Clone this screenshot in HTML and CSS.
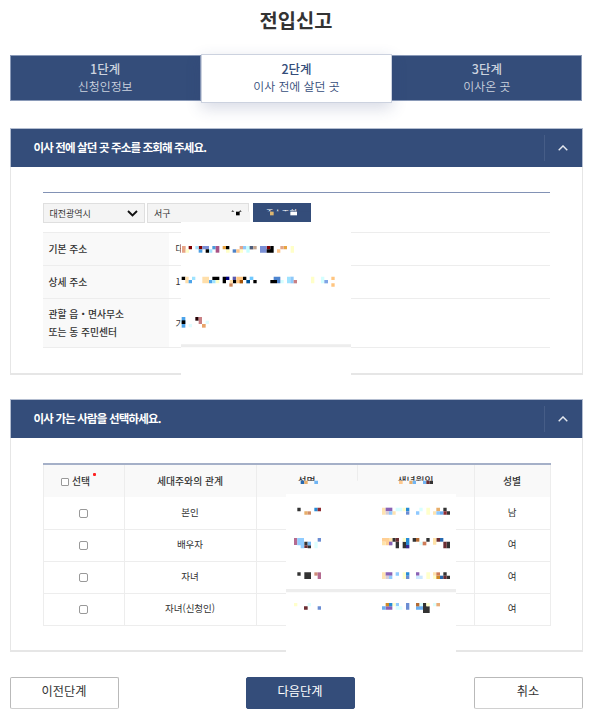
FILE: index.html
```html
<!DOCTYPE html>
<html lang="ko">
<head>
<meta charset="utf-8">
<title>전입신고</title>
<link rel="stylesheet" href="styles.css">
</head>
<body>
<main class="page">
  <h1 class="title">전입신고</h1>
  <ol class="steps">
    <li class="step"><strong>1단계</strong><span>신청인정보</span></li>
    <li class="step active"><strong>2단계</strong><span>이사 전에 살던 곳</span></li>
    <li class="step"><strong>3단계</strong><span>이사온 곳</span></li>
  </ol>

  <section class="panel panel-address">
    <header class="panel-head">
      <h2 class="long">이사 전에 살던 곳 주소를 조회해 주세요.</h2>
      <span class="toggle"><svg width="10" height="6" viewBox="0 0 10 6"><path d="M.7 5.2 5 .9l4.3 4.3"/></svg></span>
    </header>
    <div class="panel-body">
      <div class="search">
        <div class="select">대전광역시<svg width="11" height="7" viewBox="0 0 11 7"><path d="M1 1l4.5 4.4L10 1"/></svg></div>
        <div class="select">서구<svg width="11" height="7" viewBox="0 0 11 7"><path d="M1 1l4.5 4.4L10 1"/></svg></div>
        <div class="lookup">주소조회</div>
      </div>
      <dl class="info">
        <dt>기본 주소</dt><dd>대</dd>
        <dt>상세 주소</dt><dd>1</dd>
        <dt class="tall">관할 읍・면사무소<br>또는 동 주민센터</dt><dd class="tall">가</dd>
      </dl>
    </div>
    <svg class="redaction" width="573" height="250" viewBox="30 384 1719 750">
      <path fill="#fff" d="M543 666h510v464H543z"/>
      <g transform="translate(480 570)">
        <path fill="#f4f4f4" d="M190 65h80v31H190z"/>
        <path fill="#344d7a" d="M279 64h174v32H279z"/>
        <path fill="#000" d="M228 65h11v11h-11z"/>
        <path fill="#dcb670" d="M330 65h11v11h-11z"/>
        <path fill="#fff" d="M391 65h20v11h-20z"/>
        <path fill="#e8a486" d="M66 168h11v20H66zM269 168h10v10h-10z"/>
        <path fill="#800000" d="M86 168h10v10H86zM116 168h11v10h-11zM320 168h11v10h-11z"/>
        <path fill="#ffffc8" d="M77 178h10v10H77zM198 178h11v10h-11zM239 178h10v10h-10zM392 168h10v20h-10z"/>
        <path fill="#a5e3ff" d="M106 168h10v10h-10zM147 178h10v10h-10z"/>
        <path fill="#4c9fe5" d="M116 178h11v10h-11z"/>
        <path fill="#7a8fd5" d="M127 168h20v10h-20zM300 168h20v20h-20z"/>
        <path fill="#000" d="M137 178h10v10h-10zM198 168h10v10h-10zM320 178h21v10h-21zM331 168h10v10h-10z"/>
        <path fill="#4d9bdc" d="M157 168h10v10h-10z"/>
        <path fill="#a95386" d="M167 168h11v20h-11z"/>
        <path fill="#e8a440" d="M188 168h10v10h-10zM371 168h10v10h-10z"/>
        <path fill="#4d82c8" d="M218 178h11v10h-11z"/>
        <path fill="#ffc68a" d="M229 178h10v10h-10zM351 178h10v10h-10z"/>
        <path fill="#e2a58a" d="M239 168h10v10h-10zM361 168h10v10h-10z"/>
        <path fill="#8ec9fa" d="M249 168h10v10h-10z"/>
        <path fill="#c8ffff" d="M259 168h10v20h-10z"/>
        <path fill="#4d5d7c" d="M269 168h11v10h-11z"/>
        <path fill="#c1a28c" d="M280 168h10v10h-10z"/>
        <path fill="#000" d="M65 260h11v10H65zM157 260h21v10h-21zM188 260h10v20h-10zM218 270h11v10h-11zM249 260h10v10h-10zM280 270h10v10h-10zM331 270h20v10h-20z"/>
        <path fill="#ffdfaa" d="M76 260h10v20H76zM127 260h20v20h-20zM209 270h10v10h-10z"/>
        <path fill="#4da4ea" d="M86 270h10v10H86zM147 270h10v10h-10z"/>
        <path fill="#9ee3ff" d="M96 260h10v10H96zM157 270h10v10h-10zM381 260h10v20h-10z"/>
        <path fill="#ffffc8" d="M167 270h11v10h-11zM453 260h10v20h-10z"/>
        <path fill="#000080" d="M198 260h10v10h-10z"/>
        <path fill="#ce875b" d="M208 280h10v10h-10z"/>
        <path fill="#5c5aac" d="M218 260h10v10h-10z"/>
        <path fill="#ffc580" d="M229 260h20v20h-20zM514 260h10v10h-10zM514 280h10v10h-10z"/>
        <path fill="#a65408" d="M239 270h10v10h-10z"/>
        <path fill="#00559a" d="M259 270h11v10h-11z"/>
        <path fill="#70c9ff" d="M269 260h11v10h-11z"/>
        <path fill="#d4ffff" d="M361 270h10v10h-10zM483 260h10v20h-10z"/>
        <path fill="#4d85d0" d="M341 260h20v10h-20zM351 270h10v10h-10z"/>
        <path fill="#8ec9fa" d="M391 260h10v20h-10z"/>
        <path fill="#c98084" d="M401 270h10v10h-10z"/>
        <path fill="#7fa5e5" d="M493 270h11v10h-11z"/>
      </g>
      <g transform="translate(480 840)">
        <path fill="#4da4ea" d="M65 111h11v32H65z"/>
        <path fill="#000" d="M65 121h11v11H65z"/>
        <path fill="#dffcff" d="M86 132h10v10H86zM137 122h10v10h-10z"/>
        <path fill="#250004" d="M106 111h10v11h-10z"/>
        <path fill="#c98084" d="M116 111h10v21h-10z"/>
        <path fill="#e8a46a" d="M126 132h11v11h-11z"/>
        <path fill="#ededed" d="M63 193h510v9H63z"/>
      </g>
    </svg>
  </section>

  <section class="panel panel-people">
    <header class="panel-head">
      <h2>이사 가는 사람을 선택하세요.</h2>
      <span class="toggle"><svg width="10" height="6" viewBox="0 0 10 6"><path d="M.7 5.2 5 .9l4.3 4.3"/></svg></span>
    </header>
    <div class="panel-body">
      <table class="people">
        <colgroup><col class="c1"><col class="c2"><col class="c3"><col class="c4"><col class="c5"></colgroup>
        <thead><tr><th><span class="pick"><i class="box small"></i>선택<b class="dot"></b></span></th><th>세대주와의 관계</th><th>성명</th><th>생년월일</th><th>성별</th></tr></thead>
        <tbody>
          <tr><td><i class="box"></i></td><td>본인</td><td></td><td></td><td>남</td></tr>
          <tr><td><i class="box"></i></td><td>배우자</td><td></td><td></td><td>여</td></tr>
          <tr><td><i class="box"></i></td><td>자녀</td><td></td><td></td><td>여</td></tr>
          <tr><td><i class="box"></i></td><td>자녀(신청인)</td><td></td><td></td><td>여</td></tr>
        </tbody>
      </table>
    </div>
    <svg class="redaction" width="573" height="258" viewBox="30 1197 1719 774">
      <path fill="#f9f9f9" d="M858 1442h510v42H858z"/>
      <path fill="#fff" d="M858 1482h510v486H858z"/>
      <g transform="translate(810 1350)">
        <path fill="#2769b0" d="M92 92h11v10H92z"/>
        <path fill="#e8ae6a" d="M103 92h10v10h-10zM418 92h10v10h-10z"/>
        <path fill="#70b5f4" d="M133 92h11v10h-11zM428 92h10v10h-10zM459 92h10v10h-10z"/>
        <path fill="#ffc98e" d="M387 92h11v10h-11z"/>
        <path fill="#6b2d32" d="M469 92h10v10h-10z"/>
        <path fill="#333" d="M479 92h10v10h-10zM82 173h10v11H82zM520 173h10v11h-10zM530 184h10v10h-10z"/>
        <path fill="#e8ae6a" d="M103 184h10v10h-10zM499 173h11v11h-11z"/>
        <path fill="#cf8c68" d="M113 184h10v10h-10z"/>
        <path fill="#278bd5" d="M133 173h10v11h-10zM408 173h10v11h-10z"/>
        <path fill="#8e2b30" d="M143 173h10v11h-10zM520 184h10v10h-10z"/>
        <path fill="#ffe3b0" d="M336 173h11v21h-11zM367 184h10v10h-10zM489 184h10v10h-10z"/>
        <path fill="#8a62b5" d="M347 173h20v11h-20z"/>
        <path fill="#d6ccd6" d="M347 184h10v10h-10z"/>
        <path fill="#8ec9ff" d="M357 184h10v10h-10zM438 184h10v10h-10zM499 184h11v10h-11z"/>
        <path fill="#d8ffff" d="M377 173h20v11h-20zM448 173h10v11h-10z"/>
        <path fill="#ffffcb" d="M398 173h10v11h-10zM469 173h11v21h-11z"/>
        <path fill="#6b8dd3" d="M408 184h10v10h-10z"/>
        <path fill="#67adf0" d="M510 184h10v10h-10z"/>
        <path fill="#b46a90" d="M72 264h10v21H72z"/>
        <path fill="#90ccff" d="M82 264h20v22H82zM92 286h11v9H92zM357 275h10v10h-10z"/>
        <path fill="#333" d="M103 275h10v11h-10zM113 286h10v9h-10zM367 264h10v11h-10zM377 275h10v20h-10zM398 275h10v20h-10zM428 264h10v11h-10zM469 264h10v11h-10zM530 275h10v20h-10z"/>
        <path fill="#6b2d32" d="M103 286h10v8h-10zM377 264h10v11h-10zM499 264h11v11h-11zM520 275h10v20h-10z"/>
        <path fill="#70b5f4" d="M113 275h10v11h-10z"/>
        <path fill="#6b8dd3" d="M143 264h10v11h-10z"/>
        <path fill="#ddffff" d="M133 275h10v20h-10zM448 275h10v11h-10z"/>
        <path fill="#ffcf94" d="M336 264h21v11h-21zM347 275h10v11h-10z"/>
        <path fill="#ffe3a9" d="M357 264h10v11h-10zM336 275h11v11h-11zM489 264h10v20h-10z"/>
        <path fill="#8a62b5" d="M357 275h10v11h-10z"/>
        <path fill="#ffffcb" d="M398 264h10v11h-10z"/>
        <path fill="#278bd5" d="M408 264h10v21h-10z"/>
        <path fill="#352b91" d="M408 285h10v10h-10z"/>
        <path fill="#b46a32" d="M438 264h10v11h-10z"/>
        <path fill="#cf7c58" d="M458 275h11v11h-11z"/>
        <path fill="#2769b0" d="M510 264h10v11h-10z"/>
      </g>
      <g transform="translate(810 1620)">
        <path fill="#333" d="M82 97h10v10H82zM103 97h20v20h-20zM520 97h10v10h-10zM530 107h10v10h-10zM459 189h10v30h-10zM469 199h10v20h-10z"/>
        <path fill="#cf8c78" d="M133 97h10v10h-10z"/>
        <path fill="#b46a90" d="M143 97h10v20h-10z"/>
        <path fill="#ffe3b0" d="M336 97h11v20h-11zM489 97h10v10h-10z"/>
        <path fill="#8a62b5" d="M347 97h20v10h-20zM438 97h10v10h-10zM347 199h20v10h-20z"/>
        <path fill="#d6ccd6" d="M347 107h10v10h-10z"/>
        <path fill="#90ccff" d="M357 107h10v10h-10zM377 97h10v10h-10zM377 189h10v10h-10z"/>
        <path fill="#ffffcb" d="M398 97h10v20h-10zM469 97h11v20h-11zM489 107h10v10h-10zM367 189h10v10h-10zM469 189h10v10h-10zM72 189h10v10H72z"/>
        <path fill="#278bd5" d="M408 97h10v10h-10zM357 189h10v10h-10z"/>
        <path fill="#6b8dd3" d="M408 107h10v10h-10zM143 199h10v10h-10zM408 189h10v20h-10z"/>
        <path fill="#cce8ff" d="M438 107h20v10h-20z"/>
        <path fill="#ce7c58" d="M499 97h11v10h-11z"/>
        <path fill="#d08a25" d="M499 107h11v10h-11zM347 189h10v10h-10z"/>
        <path fill="#2769b0" d="M510 107h10v10h-10z"/>
        <path fill="#6b2d32" d="M520 107h10v10h-10zM102 199h11v10h-11z"/>
        <path fill="#ededed" d="M48 147h510v10H48z"/>
        <path fill="#ddffff" d="M113 189h10v10h-10zM448 189h11v10h-11zM489 189h10v10h-10zM377 199h20v10h-20z"/>
        <path fill="#6bafef" d="M336 199h11v10h-11zM438 199h21v10h-21z"/>
        <path fill="#b46a32" d="M438 189h10v10h-10z"/>
        <path fill="#e8ae7a" d="M499 189h11v10h-11z"/>
      </g>
    </svg>
  </section>

  <nav class="actions">
    <div class="btn">이전단계</div>
    <div class="btn primary">다음단계</div>
    <div class="btn">취소</div>
  </nav>
</main>
</body>
</html>
```
FILE: styles.css
```css
* { box-sizing: border-box; }
body {
  margin: 0;
  background: #fff;
  color: #333;
  font-family: "Noto Sans CJK KR", sans-serif;
  font-size: 9.8px;
}
.page { width: 573px; margin-left: 9.5px; height: 728px; }
.title {
  margin: 0;
  height: 55px;
  padding-top: 5px;
  font-size: 19.8px;
  line-height: 30px;
  font-weight: 700;
  text-align: center;
}
.steps {
  display: flex;
  height: 46px;
  margin: 0;
  padding: 0;
  list-style: none;
}
.step {
  flex: 1;
  display: flex;
  flex-direction: column;
  align-items: center;
  padding-top: 5px;
  background: #344d7a;
  border: 1px solid #8a9ab8;
  border-left-width: 0;
  color: #ccd3df;
  font-size: 11.9px;
  line-height: 16.5px;
}
.step:first-child { border-left-width: 1px; }
.step strong { font-size: 12.5px; font-weight: 500; }
.step.active {
  position: relative;
  height: 49px;
  margin-top: -1px;
  padding-top: 6px;
  background: #fff;
  border: 1px solid #ccd2df;
  color: #344d7a;
  box-shadow: 0 5px 16px rgba(52, 67, 122, .2);
}
.step span { font-weight: 350; }
.panel { position: relative; border: 1px solid #e6e6e6; border-width: 0 1.5px 2px; }
.panel-address { height: 247px; margin-top: 27px; }
.panel-people { height: 253px; margin-top: 24px; }
.panel-head {
  display: flex;
  align-items: center;
  justify-content: space-between;
  height: 39px;
  margin: 0 -1px;
  padding-left: 23px;
  background: #344d7a;
  border: 1px solid #b3bdd0;
  border-width: 1px 1px 0;
}
.panel-head h2 {
  margin: 0;
  padding-bottom: 2px;
  color: #fff;
  font-size: 11.5px;
  font-weight: 700;
  letter-spacing: -.82px;
}
.panel-head h2.long { letter-spacing: -.86px; }
.toggle {
  display: flex;
  align-items: center;
  justify-content: center;
  width: 38px;
  height: 26px;
  border-left: 1px solid #465d87;
}
.toggle svg { fill: none; stroke: #e4e8ef; stroke-width: 1.4; }
.panel-body { padding: 25px 31.5px 0 32px; }
.search {
  display: flex;
  gap: 2.5px;
  padding-top: 10px;
  border-top: 1.5px solid #8292b5;
}
.select {
  display: flex;
  align-items: center;
  justify-content: space-between;
  width: 102px;
  height: 20px;
  padding: 0 6px;
  background: #f4f4f4;
  border: 1px solid #dfdfdf;
  font-size: 9px;
}
.select svg { fill: none; stroke: #111; stroke-width: 1.9; }
.lookup {
  width: 58px;
  height: 18px;
  margin-left: 1px;
  background: #344d7a;
  color: #fff;
  font-size: 8.5px;
  line-height: 18px;
  text-align: center;
}
.info {
  display: grid;
  grid-template-columns: 126px 1fr;
  grid-template-rows: 33px 33px 49px;
  margin: 9px 0 0;
  border-bottom: 1px solid #ededed;
}
.info dt, .info dd {
  margin: 0;
  padding-left: 6px;
  border-top: 1px solid #ededed;
  line-height: 32px;
}
.info dt { background: #f9f9f9; font-weight: 500; }
.info dd { padding-left: 7px; font-size: 9px; }
.info dt.tall { padding-top: 6px; line-height: 18px; }
.info dd.tall { line-height: 49px; }
.people {
  width: 507px;
  table-layout: fixed;
  border-collapse: collapse;
  border-top: 2px solid #a5b0c8;
  text-align: center;
}
.c1 { width: 81px; }
.c2 { width: 132px; }
.c3 { width: 101px; }
.c4 { width: 117px; }
.c5 { width: 76px; }
.people th, .people td { padding: 0; border: 1px solid #ededed; }
.people th {
  height: 33px;
  background: #f9f9f9;
  border-top: 2px solid #a5b0c8;
  border-bottom: 0;
  font-weight: 500;
}
.people td { height: 32px; padding-bottom: 2px; font-size: 9.5px; }
.people tbody tr:first-child td { border-top: 0; }
.box {
  display: inline-block;
  width: 9px;
  height: 9px;
  border: 1px solid #999;
  border-radius: 2px;
  background: #fff;
  vertical-align: middle;
}
.pick { position: relative; display: inline-flex; align-items: center; gap: 3px; left: -8px; }
.pick .box { width: 8px; height: 8px; margin-top: 2px; border-radius: 1px; }
.dot {
  position: absolute;
  top: -1px;
  right: -6px;
  width: 3px;
  height: 3px;
  border-radius: 1px;
  background: #f22;
}
.redaction { position: absolute; left: -1px; top: 0; }
.actions { display: flex; justify-content: space-between; margin-top: 25px; }
.btn {
  width: 109px;
  height: 32px;
  border: 1px solid #b9b9b9;
  border-bottom-color: #d0d0d0;
  border-radius: 2px;
  font-size: 12.2px;
  line-height: 27px;
  text-align: center;
}
.btn.primary { margin-left: 8px; background: #344d7a; border-color: #344d7a; color: #fff; }
```
